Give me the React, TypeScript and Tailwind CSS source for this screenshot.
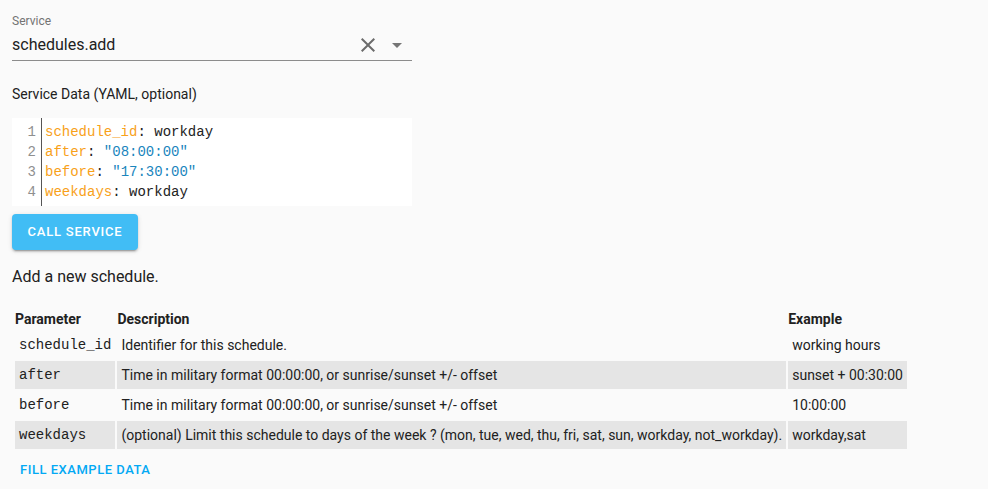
const yaml = [
  { key: "schedule_id", value: "workday", str: false },
  { key: "after", value: '"08:00:00"', str: true },
  { key: "before", value: '"17:30:00"', str: true },
  { key: "weekdays", value: "workday", str: false },
]

const params = [
  { name: "schedule_id", desc: "Identifier for this schedule.", example: "working hours" },
  { name: "after", desc: "Time in military format 00:00:00, or sunrise/sunset +/- offset", example: "sunset + 00:30:00" },
  { name: "before", desc: "Time in military format 00:00:00, or sunrise/sunset +/- offset", example: "10:00:00" },
  {
    name: "weekdays",
    desc: "(optional) Limit this schedule to days of the week ? (mon, tue, wed, thu, fri, sat, sun, workday, not_workday).",
    example: "workday,sat",
  },
]

const mono = "font-['Liberation_Mono','DejaVu_Sans_Mono',monospace]"

export default function App() {
  return (
    <div className="min-h-[489px] bg-[#fafafa] px-3 pt-[13px] font-['Roboto',sans-serif] text-[#212121]">
      {/* service picker */}
      <div className="w-[400px] border-b border-[#8c8c8c]">
        <div className="text-xs leading-4 text-[#737373]">Service</div>
        <div className="flex h-[31px] items-center">
          <span className="flex-1 text-base leading-6">schedules.add</span>
          <svg className="mr-[5px] h-6 w-6 text-[#6b6b6b]" viewBox="0 0 24 24" fill="currentColor">
            <path d="M19,6.41L17.59,5L12,10.59L6.41,5L5,6.41L10.59,12L5,17.59L6.41,19L12,13.41L17.59,19L19,17.59L13.41,12L19,6.41Z" />
          </svg>
          <svg className="mr-[3px] h-6 w-6 text-[#757575]" viewBox="0 0 24 24" fill="currentColor">
            <path d="M7,10L12,15L17,10H7Z" />
          </svg>
        </div>
      </div>

      <div className="mt-[23px] text-sm leading-5">Service Data (YAML, optional)</div>

      {/* yaml editor */}
      <div className={`mt-[14px] flex w-[400px] bg-white text-sm leading-5 ${mono}`}>
        <div className="w-[30px] border-r border-[#555] py-1 pr-[5px] text-right text-[#8f8f8f]">
          {yaml.map((_, i) => (
            <div key={i}>{i + 1}</div>
          ))}
        </div>
        <div className="py-1 pl-[3px]">
          {yaml.map((l) => (
            <div key={l.key}>
              <span className="text-[#f8a11a]">{l.key}</span>
              <span className="text-[#222]">: </span>
              <span className={l.str ? "text-[#1a85bd]" : "text-[#222]"}>{l.value}</span>
            </div>
          ))}
        </div>
      </div>

      <button className="mt-2 h-9 w-[126px] rounded bg-[#41bdf5] text-[13px] font-medium tracking-[0.06em] text-white shadow-[0_3px_1px_-2px_rgba(0,0,0,0.2),0_2px_2px_0_rgba(0,0,0,0.14),0_1px_5px_0_rgba(0,0,0,0.12)]">
        CALL SERVICE
      </button>

      <div className="mt-[15px] text-base leading-6">Add a new schedule.</div>

      {/* parameter table */}
      <table className="mt-[10px] ml-px border-separate border-spacing-[2px] text-sm">
        <thead>
          <tr className="h-[28px]">
            <th className="px-0 pt-2 text-left font-bold">Parameter</th>
            <th className="px-0 pt-2 text-left font-bold">Description</th>
            <th className="px-0 pt-2 text-left font-bold">Example</th>
          </tr>
        </thead>
        <tbody>
          {params.map((p, i) => (
            <tr key={p.name} className={`h-[28px] ${i % 2 === 1 ? "bg-[#e5e5e5]" : ""}`}>
              <td className={`px-1 ${mono}`}>{p.name}</td>
              <td className="px-1">{p.desc}</td>
              <td className="px-1">{p.example}</td>
            </tr>
          ))}
        </tbody>
      </table>

      <button className="mt-[9px] ml-2 text-[13px] font-medium tracking-[0.04em] text-[#03a9f4]">
        FILL EXAMPLE DATA
      </button>
    </div>
  )
}
